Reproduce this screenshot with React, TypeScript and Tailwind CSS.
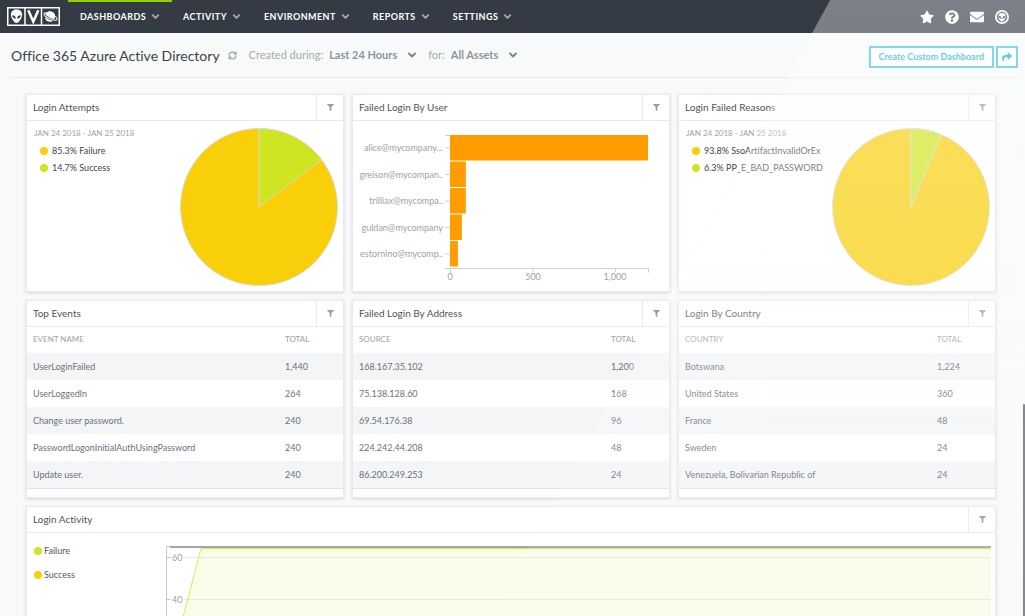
import type { ReactNode } from 'react'
import { FaEnvelope, FaFilter, FaQuestionCircle, FaShare, FaStar } from 'react-icons/fa'
import { ChevronDown, RefreshCw } from 'lucide-react'

const YELLOW = '#f8cf08'
const LIME = '#cfe521'

const navItems = ['DASHBOARDS', 'ACTIVITY', 'ENVIRONMENT', 'REPORTS', 'SETTINGS']

type Slice = { label: string; value: number; color: string }

const attempts: Slice[] = [
  { label: 'Failure', value: 85.3, color: YELLOW },
  { label: 'Success', value: 14.7, color: LIME },
]

const reasons: Slice[] = [
  { label: 'SsoArtifactInvalidOrEx', value: 93.8, color: YELLOW },
  { label: 'PP_E_BAD_PASSWORD', value: 6.3, color: LIME },
]

const users = [
  { name: 'alice@mycompany...', total: 1200 },
  { name: 'greison@mycompan..', total: 96 },
  { name: 'trilliax@mycompa..', total: 96 },
  { name: 'guldan@mycompany', total: 72 },
  { name: 'estornino@mycomp..', total: 48 },
]

const tables = [
  {
    title: 'Top Events',
    column: 'EVENT NAME',
    rows: [
      ['UserLoginFailed', '1,440'],
      ['UserLoggedIn', '264'],
      ['Change user password.', '240'],
      ['PasswordLogonInitialAuthUsingPassword', '240'],
      ['Update user.', '240'],
    ],
  },
  {
    title: 'Failed Login By Address',
    column: 'SOURCE',
    rows: [
      ['168.167.35.102', '1,200'],
      ['75.138.128.60', '168'],
      ['69.54.176.38', '96'],
      ['224.242.44.208', '48'],
      ['86.200.249.253', '24'],
    ],
  },
  {
    title: 'Login By Country',
    column: 'COUNTRY',
    rows: [
      ['Botswana', '1,224'],
      ['United States', '360'],
      ['France', '48'],
      ['Sweden', '24'],
      ['Venezuela, Bolivarian Republic of', '24'],
    ],
  },
]

function Logo() {
  return (
    <svg viewBox="0 0 53 19" className="h-[19px] w-[53px]" role="img" aria-label="OVO">
      <rect x="0.75" y="0.75" width="51.5" height="17.5" fill="none" stroke="#fff" strokeWidth="1.5" />
      <path d="M18 1v17M34.5 1v17" stroke="#fff" strokeWidth="1.5" />
      <path
        fill="#fff"
        d="M9.5 2.5c3.4 0 5.6 2 5.6 5 0 3.6-3.2 8.5-5.6 8.5s-5.6-4.9-5.6-8.5c0-3 2.2-5 5.6-5z"
      />
      <path
        fill="#343b44"
        d="M5.2 8.2c2.2-.2 3.6 1.2 3.7 3.4-2.1 0-3.5-1.2-3.7-3.4zM13.8 8.2c-2.2-.2-3.6 1.2-3.7 3.4 2.1 0 3.5-1.2 3.7-3.4z"
      />
      <path fill="none" stroke="#fff" strokeWidth="2.5" d="M21.3 3.3l5 11.4 5-11.4" />
      <circle cx="43" cy="9.5" r="5.2" fill="#fff" />
      <ellipse
        cx="43.5"
        cy="9.5"
        rx="7.4"
        ry="2.3"
        fill="none"
        stroke="#343b44"
        strokeWidth="2"
        transform="rotate(24 43.5 9.5)"
      />
      <path fill="#fff" d="M38.6 6.8a5.2 5.2 0 0 1 9.2.8l.2 2.8c-3-.2-7-1.5-9.4-3.6z" />
      <ellipse
        cx="43.5"
        cy="9.5"
        rx="7.2"
        ry="2.3"
        fill="none"
        stroke="#fff"
        strokeWidth="1"
        transform="rotate(24 43.5 9.5)"
      />
    </svg>
  )
}

function AlienIcon() {
  return (
    <svg viewBox="0 0 14 14" className="size-3.5" aria-hidden="true">
      <circle cx="7" cy="7" r="6.1" fill="none" stroke="#fff" strokeWidth="1.8" />
      <path fill="#fff" d="M7 3c2.4 0 3.8 1.2 3.8 3.2 0 2.400-2.200 5.300-3.800 5.300S3.200 8.600 3.200 6.200C3.200 4.200 4.600 3 7 3z" />
      <path
        fill="#343b44"
        d="M3.400 5.800c2-.1 3.100 1 3.200 3-1.900 0-3-1.200-3.200-3zM10.600 5.800c-2-.1-3.100 1-3.200 3 1.900 0 3-1.200 3.200-3z"
      />
    </svg>
  )
}

function Card({ title, children }: { title: string; children: ReactNode }) {
  return (
    <section className="overflow-hidden border border-[#e7ebed] bg-white shadow-[0_1px_3px_rgba(60,75,90,0.2)]">
      <header className="flex h-[26px] items-stretch justify-between border-b border-[#e7ebed]">
        <h2 className="px-1.5 text-[10px] leading-6 text-[#4a545e]">{title}</h2>
        <button
          type="button"
          aria-label={`Filter ${title}`}
          className="flex w-[27px] items-center justify-center border-l border-[#e7ebed] text-[#97a0a7]"
        >
          <FaFilter className="size-[7px]" />
        </button>
      </header>
      {children}
    </section>
  )
}

function Pie({ share }: { share: number }) {
  const angle = (share / 100) * Math.PI * 2
  const x = 79 + 78.5 * Math.sin(angle)
  const y = 79 - 78.5 * Math.cos(angle)
  return (
    <svg viewBox="0 0 158 158" className="size-[158px] shrink-0" aria-hidden="true">
      <circle cx="79" cy="79" r="78.5" fill={YELLOW} stroke="#d9dcd5" />
      <path d={`M79 79V.5A78.5 78.5 0 0 1 ${x} ${y}Z`} fill={LIME} stroke="#d9dcd5" strokeLinejoin="round" />
    </svg>
  )
}

function PieCard({ title, slices }: { title: string; slices: Slice[] }) {
  return (
    <Card title={title}>
      <div className="flex h-[170px] justify-between pt-[7px] pr-[5px] pl-[7px]">
        <div>
          <p className="text-[8px] leading-[10px] whitespace-nowrap text-[#9aa3aa]">JAN 24 2018 - JAN 25 2018</p>
          <ul className="mt-1 w-[140px] pl-1.5">
            {slices.map((slice) => (
              <li key={slice.label} className="flex h-[17px] items-center gap-1">
                <span className="size-2 shrink-0 rounded-full" style={{ backgroundColor: slice.color }} />
                <span className="text-[9px] whitespace-nowrap text-[#3d464f]">
                  {slice.value}% {slice.label}
                </span>
              </li>
            ))}
          </ul>
        </div>
        <Pie share={slices[1].value} />
      </div>
    </Card>
  )
}

function BarChart() {
  const scale = 198 / 1200
  return (
    <svg viewBox="0 0 316 170" className="block w-full text-[9px]" role="img" aria-label="Failed logins by user">
      <path
        d="M92 14.5h5M92 147.5h203.5v4M97.5 147.5v4M180 147.5v4M262.5 147.5v4"
        fill="none"
        stroke="#cdd2d5"
      />
      {users.map((user, i) => {
        const y = 14 + i * 26.5
        return (
          <g key={user.name}>
            <path d={`M92 ${y + 13}h5`} stroke="#cdd2d5" />
            <rect x="97" y={y} width={user.total * scale} height="25.5" fill="#ff9d00" />
            <text x="90" y={y + 16} textAnchor="end" fill="#9aa3aa">
              {user.name}
            </text>
          </g>
        )
      })}
      <g textAnchor="middle" fill="#9aa3aa">
        <text x="97" y="159">0</text>
        <text x="180" y="159">500</text>
        <text x="262" y="159">1,000</text>
      </g>
    </svg>
  )
}

function TableCard({ title, column, rows }: { title: string; column: string; rows: string[][] }) {
  return (
    <Card title={title}>
      <div className="h-[170px]">
        <table className="w-full table-fixed border-b border-[#dfe4e7] text-left text-[9px] text-[#69727a]">
          <thead>
            <tr className="h-[26px] text-[8px] text-[#9aa3aa]">
              <th className="pb-0.5 pl-1.5 font-normal">{column}</th>
              <th className="w-[58px] pb-0.5 font-normal">TOTAL</th>
            </tr>
          </thead>
          <tbody>
            {rows.map(([name, total]) => (
              <tr key={name} className="h-[27px] odd:bg-[#f3f5f7]">
                <td className="pl-1.5 whitespace-nowrap">{name}</td>
                <td>{total}</td>
              </tr>
            ))}
          </tbody>
        </table>
      </div>
    </Card>
  )
}

function ActivityChart() {
  return (
    <svg className="block h-[240px] w-full text-[9px]" role="img" aria-label="Login activity">
      <path d="M17 84L35 16.5V240H-22z" fill="#f9fce9" />
      <rect x="35" y="16" width="100%" height="224" fill="#f9fce9" />
      <g stroke="#e6eadc">
        <line x1="1" x2="100%" y1="24.5" y2="24.5" />
        <line x1="1" x2="100%" y1="66.5" y2="66.5" />
      </g>
      <path d="M5.500 13.500H.5V240M.5 24.500h5M.5 66.500h5" fill="none" stroke="#c3c9cf" />
      <g fill="#9aa3aa" stroke="#fff" strokeWidth="3" paintOrder="stroke">
        <text x="6" y="28">60</text>
        <text x="6" y="70">40</text>
      </g>
      <line x1="4" x2="100%" y1="14" y2="14" stroke="#a4a5a8" strokeWidth="2" />
      <path d="M17 84L35 15.500" stroke="#dbe95a" />
      <line x1="35" x2="100%" y1="15.500" y2="15.500" stroke="#dcec3e" />
    </svg>
  )
}

function FilterSelect({ label, options }: { label: string; options: string[] }) {
  return (
    <label className="flex items-center gap-1.5 text-[#a3abb1]">
      {label}
      <span className="relative flex items-center">
        <select className="appearance-none bg-transparent pr-5 font-bold text-[#8c959c] outline-none">
          {options.map((option) => (
            <option key={option}>{option}</option>
          ))}
        </select>
        <ChevronDown className="pointer-events-none absolute right-0 size-3 text-[#7b858d]" strokeWidth={4} />
      </span>
    </label>
  )
}

export default function App() {
  return (
    <div className="relative flex h-screen flex-col overflow-hidden bg-[#f8faf9] font-['Lato','Liberation_Sans',sans-serif] [font-variant-ligatures:none]">
      <header className="flex h-[33px] shrink-0 items-center justify-between bg-[#343b44] pr-4 pl-[7px] text-white">
        <div className="flex h-full items-center gap-2">
          <Logo />
          <nav className="flex h-full">
            {navItems.map((item, i) => (
              <button
                key={item}
                type="button"
                className={`flex h-full items-center gap-1 border-t-2 px-[11px] pb-0.5 text-[9px] font-bold tracking-wider first:pl-3 ${
                  i === 0 ? 'border-[#8fd400]' : 'border-transparent'
                }`}
              >
                {item}
                <ChevronDown className="size-[11px] text-[#a5abb0]" strokeWidth={4} />
              </button>
            ))}
          </nav>
        </div>
        <div className="flex items-center gap-[11px]">
          <button type="button" aria-label="Favorites"><FaStar className="size-3.5" /></button>
          <button type="button" aria-label="Help"><FaQuestionCircle className="size-3.5" /></button>
          <button type="button" aria-label="Messages"><FaEnvelope className="size-3.5" /></button>
          <button type="button" aria-label="Account"><AlienIcon /></button>
        </div>
      </header>

      <div className="mr-[7px] ml-[11px] flex h-[45px] shrink-0 items-center justify-between border-b border-[#e6eaeb]">
        <div className="flex items-center text-[11px]">
          <h1 className="text-[14px] text-[#3a434c]">Office 365 Azure Active Directory</h1>
          <button type="button" aria-label="Refresh" className="mx-2 text-[#98a1a8]">
            <RefreshCw className="size-[9px]" strokeWidth={3} />
          </button>
          <div className="ml-1 flex gap-2.5">
            <FilterSelect label="Created during:" options={['Last 24 Hours', 'Last 7 Days']} />
            <FilterSelect label="for:" options={['All Assets']} />
          </div>
        </div>
        <div className="mt-1 flex h-[22px] gap-0.5 text-[9px] font-bold text-[#12b5d3]">
          <button type="button" className="border-2 border-[#3fc6de] bg-white px-2">
            Create Custom Dashboard
          </button>
          <button
            type="button"
            aria-label="Share"
            className="flex w-[22px] items-center justify-center border-2 border-[#3fc6de] bg-white"
          >
            <FaShare className="size-2.5" />
          </button>
        </div>
      </div>

      <main className="grid grid-cols-3 gap-2 pt-4 pr-[29px] pl-[26px]">
        <PieCard title="Login Attempts" slices={attempts} />
        <Card title="Failed Login By User">
          <BarChart />
        </Card>
        <PieCard title="Login Failed Reasons" slices={reasons} />
        {tables.map((table) => (
          <TableCard key={table.title} {...table} />
        ))}
        <div className="col-span-3">
          <Card title="Login Activity">
            <div className="flex pr-1">
              <ul className="w-[139px] shrink-0 space-y-3 pt-3 pl-[7px] text-[9px] leading-3 text-[#4f5963]">
                <li className="flex items-center gap-0.5">
                  <span className="size-2 rounded-full bg-[#cfe521]" />
                  Failure
                </li>
                <li className="flex items-center gap-0.5">
                  <span className="size-2 rounded-full bg-[#f8cf08]" />
                  Success
                </li>
              </ul>
              <ActivityChart />
            </div>
          </Card>
        </div>
      </main>

      {/* glare across the screen */}
      <div className="pointer-events-none absolute inset-0 bg-linear-to-b from-[#fdfdff]/36 via-[#fdfdff]/28 to-[#fdfdff]/5 [clip-path:polygon(81%_0,100%_0,100%_100%,48%_100%)]" />
      {/* scrollbar thumb */}
      <div className="absolute right-0 bottom-0 h-[212px] w-0.5 rounded-t bg-[#85888a]" />
    </div>
  )
}
